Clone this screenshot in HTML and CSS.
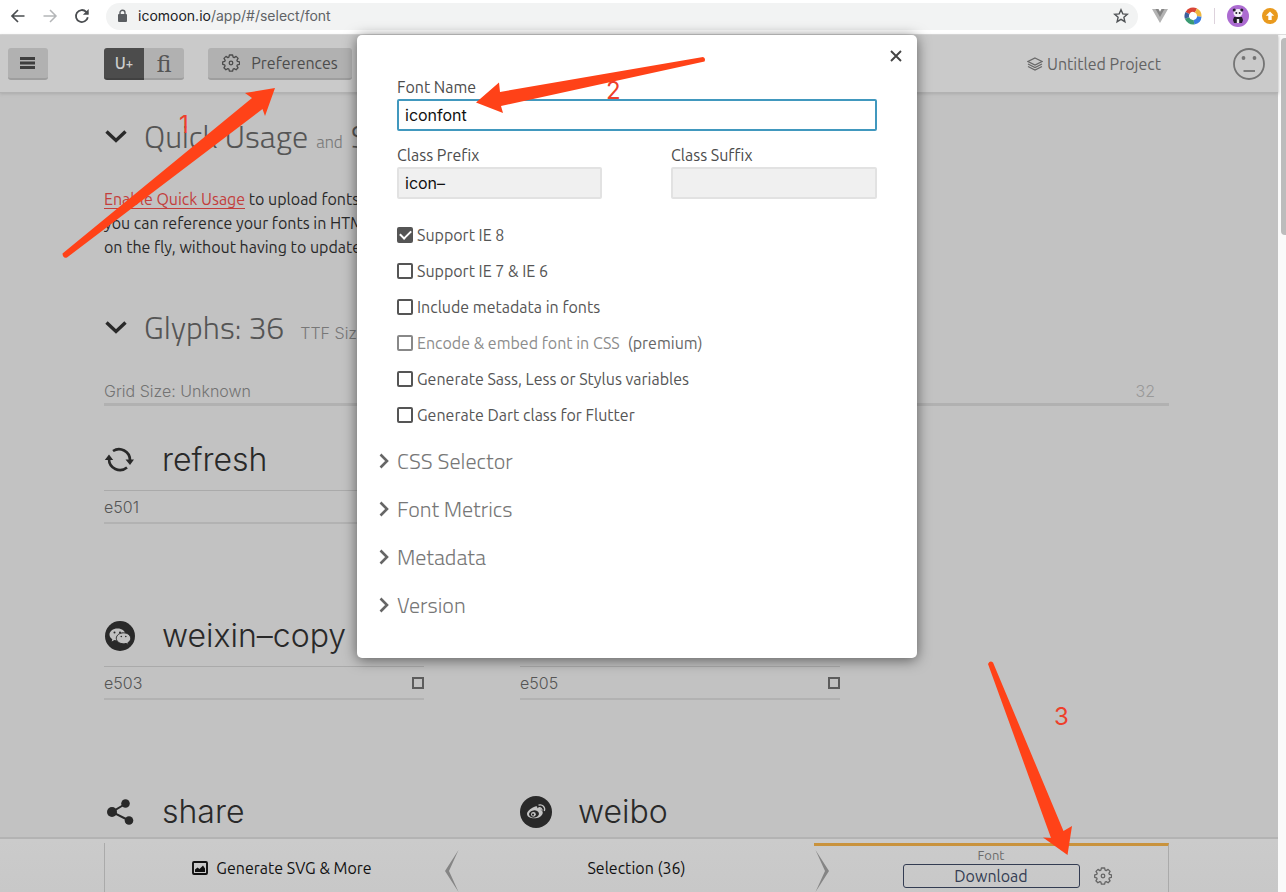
FILE: index.html
```html
<!DOCTYPE html>
<html lang="en">
<head>
<meta charset="utf-8">
<title>IcoMoon App</title>
<link rel="stylesheet" href="styles.css">
</head>
<body>
<svg class="defs" aria-hidden="true">
  <symbol id="gear" viewBox="0 0 18 18">
    <path d="M7.400 1h3.200l.5 2.100 1.100.5 1.900-1.200 2 2-1.200 1.900.5 1.100 2.100.5v2.400l-2.100.5-.5 1.100 1.200 1.900-2 2-1.900-1.200-1.100.5-.5 2.100H7.400l-.5-2.100-1.100-.5-1.900 1.200-2-2 1.200-1.900-.5-1.100L.7 10.300V7.900l2-.5.5-1.100L2 4.400l2-2 1.800 1.200 1.100-.5z" fill="none" stroke="currentColor" stroke-width="1.300" stroke-linejoin="round"/>
    <circle cx="9" cy="9" r="1.800" fill="none" stroke="currentColor" stroke-width="1.300"/>
  </symbol>
  <symbol id="down" viewBox="0 0 22 14"><path d="M1.500 2.500 11 11.500l9.500-9" fill="none" stroke="currentColor" stroke-width="3.400"/></symbol>
  <symbol id="right" viewBox="0 0 10 16"><path d="M1.500 1.500 8 8l-6.500 6.500" fill="none" stroke="currentColor" stroke-width="2.600"/></symbol>
</svg>

<div class="browser">
  <button class="nav" aria-label="Back"><svg width="16" height="16" viewBox="0 0 16 16"><path d="M14.500 8H2.500M8 2 2 8l6 6" fill="none" stroke="#4a4d50" stroke-width="1.700"/></svg></button>
  <button class="nav" aria-label="Forward"><svg width="16" height="16" viewBox="0 0 16 16"><path d="M1.500 8h12M8 2l6 6-6 6" fill="none" stroke="#b4b6b8" stroke-width="1.500"/></svg></button>
  <button class="nav" aria-label="Reload"><svg width="16" height="16" viewBox="0 0 16 16"><path d="M13.800 9.200A6 6 0 1 1 12.200 3.800L14 5.600" fill="none" stroke="#4a4d50" stroke-width="1.800"/><path d="M14.700 1v5.800H8.900z" fill="#4a4d50"/></svg></button>
  <div class="address">
    <svg width="10" height="14" viewBox="0 0 10 14"><rect x="1" y="5" width="9" height="8" rx="1" fill="#5a5d61"/><path d="M3 6V3.800a2.500 2.500 0 0 1 5 0V6" fill="none" stroke="#5a5d61" stroke-width="1.400"/></svg>
    <span class="url"><b>icomoon.io</b>/app/#/select/font</span>
    <svg width="16" height="16" viewBox="0 0 16 16"><path d="m8 1.800 1.800 4.100 4.500.4-3.400 3 1 4.400L8 11.400l-3.900 2.300 1-4.400-3.400-3 4.500-.4z" fill="none" stroke="#505356" stroke-width="1.400"/></svg>
  </div>
  <svg class="ext" width="16" height="16" viewBox="0 0 16 16"><path d="M0 1h5.500L8 5.500 10.500 1H16L8 15z" fill="#b3b3b3"/><path d="M3.500 1h3L8 3.800 9.500 1h3L8 9z" fill="#858585"/></svg>
  <svg class="ext" width="18" height="18" viewBox="0 0 18 18"><g fill="none" stroke-width="4.500"><path d="M3.500 6A6.300 6.300 0 0 1 12 3.500" stroke="#d94436"/><path d="M12 3.500A6.300 6.300 0 0 1 15.300 9.500" stroke="#efb73e"/><path d="M15.300 9.500A6.300 6.300 0 0 1 10 15.200" stroke="#3b7de0"/><path d="M10 15.200A6.300 6.300 0 0 1 3 11" stroke="#3a9a73"/><path d="M3 11a6.300 6.300 0 0 1 .5-5" stroke="#3c5f9c"/></g></svg>
  <span class="divider"></span>
  <svg class="ext" width="22" height="22" viewBox="0 0 22 22"><circle cx="11" cy="11" r="11" fill="#ac6bd1"/><path d="M7 12h8l1 3-1 3H7l-1-3z" fill="#201d28"/><ellipse cx="11" cy="8" rx="4.500" ry="4" fill="#f2eff5"/><circle cx="7.200" cy="5" r="1.500" fill="#272230"/><circle cx="14.800" cy="5" r="1.500" fill="#272230"/><circle cx="9.300" cy="8" r="1" fill="#272230"/><circle cx="12.700" cy="8" r="1" fill="#272230"/><path d="M9.800 14h2.400v4H9.800z" fill="#eee"/></svg>
  <svg class="ext" width="16" height="16" viewBox="0 0 16 16"><circle cx="8" cy="8" r="8" fill="#e99a1e"/><path d="m8 3.500 4.200 4.300H9.700V12H6.300V7.800H3.800z" fill="#fff"/></svg>
</div>

<div class="stage">
  <div class="app">
    <header class="topbar">
      <button class="btn menu" aria-label="Menu"><svg width="16" height="12" viewBox="0 0 16 12"><path d="M0 1.500h15M0 6h15M0 10.500h15" stroke="#3e3e3e" stroke-width="2.800"/></svg></button>
      <div class="toggle">
        <button class="btn on">U<small>+</small></button>
        <button class="btn liga">ﬁ</button>
      </div>
      <button class="btn prefs"><svg width="18" height="18"><use href="#gear"/></svg>Preferences</button>
      <a class="project" href="#"><svg width="16" height="14" viewBox="0 0 16 14"><g fill="none" stroke="#686868" stroke-width="1.200"><path d="M8 1 15 4.500 8 8 1 4.500z"/><path d="M1 7l7 3.500L15 7M1 9.500 8 13l7-3.500"/></g></svg>Untitled Project</a>
      <button class="face" aria-label="Account"><svg width="34" height="34" viewBox="0 0 34 34"><circle cx="17" cy="17" r="15" fill="none" stroke="#747474" stroke-width="1.800"/><circle cx="11.500" cy="11" r="1.900" fill="#747474"/><circle cx="22.500" cy="11" r="1.900" fill="#747474"/><path d="M11.500 24h11.500" stroke="#747474" stroke-width="1.800"/></svg></button>
    </header>

    <main class="content">
      <h2 class="heading"><svg width="22" height="14"><use href="#down"/></svg><span>Quick Usage</span><small>and</small><span class="tail">S</span></h2>
      <p class="intro"><a href="#">Enable Quick Usage</a> to upload fonts<br>you can reference your fonts in HTML<br>on the fly, without having to update</p>
      <h2 class="heading"><svg width="22" height="14"><use href="#down"/></svg><span>Glyphs: 36</span><small class="ttf">TTF Size</small></h2>
      <div class="gridsize"><span>Grid Size: Unknown</span><span>32</span></div>
      <div class="glyphs">
        <article class="glyph">
          <div class="name"><svg width="32" height="32" viewBox="0 0 32 32"><g fill="none" stroke="#292929" stroke-width="2.600"><path d="M9 7a11 11 0 0 1 17 9"/><path d="M23 23.500A11 11 0 0 1 5 15"/></g><path d="M21.500 15.500h8.500L26 21zM.8 16h8.400L5 10.500z" fill="#292929"/></svg>refresh</div>
          <div class="code"><span>e501</span></div>
        </article>
        <article class="glyph"><div class="name"></div><div class="code"></div></article>
        <article class="glyph">
          <div class="name"><svg width="32" height="32" viewBox="0 0 32 32"><circle cx="16" cy="16" r="15" fill="#292929"/><path d="M13.500 8.500c-4.500 0-8 2.700-8 6 0 2 1.100 3.700 2.800 4.800L7.700 21.500l2.700-1.500c1 .3 2 .5 3.100.5 4.500 0 8-2.700 8-6s-3.500-6-8-6z" fill="#c1c1c1"/><path d="M19.500 12.800c-4 0-7.200 2.500-7.200 5.500s3.200 5.500 7.200 5.500c.9 0 1.700-.1 2.500-.4l2.300 1.300-.5-1.900c1.800-1 2.900-2.600 2.900-4.500 0-3-3.200-5.500-7.200-5.500z" fill="#c1c1c1" stroke="#292929" stroke-width="1"/><g fill="#292929"><circle cx="10.500" cy="12.500" r="1"/><circle cx="16" cy="12.500" r="1"/><circle cx="17.300" cy="16.500" r=".8"/><circle cx="21.800" cy="16.500" r=".8"/></g></svg>weixin–copy</div>
          <div class="code"><label for="g503">e503</label><input type="checkbox" id="g503"></div>
        </article>
        <article class="glyph">
          <div class="name"></div>
          <div class="code"><label for="g505">e505</label><input type="checkbox" id="g505"></div>
        </article>
        <article class="glyph">
          <div class="name"><svg width="32" height="32" viewBox="0 0 32 32"><path d="M22 7.500 8 16l17 8.500" fill="none" stroke="#292929" stroke-width="2"/><g fill="#292929"><circle cx="21.500" cy="7.500" r="4.300"/><circle cx="8" cy="16" r="5"/><circle cx="25" cy="24.500" r="4.300"/></g></svg>share</div>
          <div class="code"></div>
        </article>
        <article class="glyph">
          <div class="name"><svg width="32" height="32" viewBox="0 0 32 32"><circle cx="16" cy="16" r="16" fill="#292929"/><path d="M14 11c2-1.200 3.700-.9 3.300 1.200 2.500-.9 4.500-.1 3.500 2 3.500 1.100 2 5.200-1.500 7-4 2.100-12 1.400-12.300-3.200C6.800 15.400 11 12.200 14 11z" fill="#c5c5c5"/><ellipse cx="14" cy="18" rx="5" ry="3.600" fill="#292929" transform="rotate(-10 14 18)"/><circle cx="13.400" cy="18.300" r="2.400" fill="#c5c5c5"/><circle cx="13" cy="18.600" r="1.100" fill="#292929"/><path d="M18.500 9.200c4-1.200 7.200 2 5.800 5.800M18.500 11.800c2.300-.5 4 1 3.300 3" fill="none" stroke="#c5c5c5" stroke-width="1.300"/></svg>weibo</div>
          <div class="code"></div>
        </article>
      </div>
    </main>

    <footer class="bottombar">
      <button class="tab first"><svg width="16" height="14" viewBox="0 0 16 14"><rect x="1" y="1" width="14" height="12" rx="1" fill="none" stroke="#111" stroke-width="1.900"/><path d="M3 11V8.500l2.500-2 2 1.500L11 4.500l2 3V11z" fill="#111"/></svg>Generate SVG &amp; More<svg class="edge" width="14" height="42" viewBox="0 0 14 42"><path d="M13.500 0 0 21l13.500 21L4 21z" fill="#858585"/></svg></button>
      <button class="tab">Selection (36)</button>
      <div class="tab current">
        <svg class="edge" width="14" height="42" viewBox="0 0 14 42"><path d="M.5 0 14 21 .5 42 10 21z" fill="#858585"/></svg>
        <span class="kind">Font</span>
        <div class="actions"><button class="download">Download</button><button class="gearbtn" aria-label="Font settings"><svg width="18" height="18"><use href="#gear"/></svg></button></div>
      </div>
    </footer>
  </div>
  <div class="scroll"><div class="thumb"></div></div>

  <div class="layer">
    <form class="modal">
      <button type="button" class="close" aria-label="Close"><svg width="14" height="14" viewBox="0 0 14 14"><path d="m2 2 10 10M12 2 2 12" stroke="#444" stroke-width="1.900"/></svg></button>
      <div class="field"><label for="fname">Font Name</label><input class="focus" id="fname" type="text" value="iconfont"></div>
      <div class="pair">
        <div class="field"><label for="pre">Class Prefix</label><input id="pre" type="text" value="icon–"></div>
        <div class="field"><label for="suf">Class Suffix</label><input id="suf" type="text"></div>
      </div>
      <div class="checks">
        <label><input type="checkbox" checked>Support IE 8</label>
        <label><input type="checkbox">Support IE 7 &amp; IE 6</label>
        <label><input type="checkbox">Include metadata in fonts</label>
        <label class="off"><input type="checkbox" disabled>Encode &amp; embed font in CSS<span>(premium)</span></label>
        <label><input type="checkbox">Generate Sass, Less or Stylus variables</label>
        <label><input type="checkbox">Generate Dart class for Flutter</label>
      </div>
      <div class="groups">
        <button type="button"><svg width="10" height="16"><use href="#right"/></svg>CSS Selector</button>
        <button type="button"><svg width="10" height="16"><use href="#right"/></svg>Font Metrics</button>
        <button type="button"><svg width="10" height="16"><use href="#right"/></svg>Metadata</button>
        <button type="button"><svg width="10" height="16"><use href="#right"/></svg>Version</button>
      </div>
    </form>
  </div>
</div>

<svg class="marks" width="1286" height="892" viewBox="0 0 1286 892">
  <g fill="#ff4218">
    <path d="M62.500 253.500 252 98l-7-5 30-5-10 28-2.500-7L67 257.500q-4 1.500-4.500-4z"/>
    <path d="M703 57q3 1 1.500 4.500L501 106l2 7-27-10.500 23-20 1 9.500z"/>
    <path d="M988 664q2-4 5-1.500L1063.500 831l8.500-5-4.500 29-24.500-17.500 8 .5z"/>
  </g>
  <g class="digits"><text x="179" y="133">1</text><text x="606" y="99">2</text><text x="1054" y="725">3</text></g>
</svg>
</body>
</html>
```
FILE: styles.css
```css
* { box-sizing: border-box; }
body {
  margin: 0;
  height: 100vh;
  display: flex;
  flex-direction: column;
  overflow: hidden;
  position: relative;
  background: #fff;
  color: #292929;
  font: 16px/24px Ubuntu, "Noto Sans", sans-serif;
}
button { border: 0; padding: 0; background: none; color: inherit; font: inherit; }
svg { flex: none; display: block; }
.defs { position: absolute; width: 0; height: 0; }

/* browser chrome */
.browser {
  flex: none;
  height: 35px;
  display: flex;
  align-items: center;
  padding: 0 8px 2px 10px;
  border-bottom: 1px solid #dcdcdc;
}
.nav { width: 16px; margin-right: 16px; }
.address {
  flex: 1;
  height: 27px;
  margin-right: 14px;
  padding: 0 9px 0 11px;
  border-radius: 14px;
  background: #f2f3f3;
  display: flex;
  align-items: center;
  gap: 11px;
}
.url { flex: 1; font: 14px/24px Inter, Roboto, sans-serif; color: #606366; }
.url b { font-weight: 400; color: #202124; }
.ext { margin-right: 16px; }
.ext:nth-of-type(2) { margin-right: 12px; }
.divider { width: 1px; height: 16px; margin-right: 12px; background: #ddd2dc; }
.ext:nth-of-type(3) { margin-right: 13px; }
.ext:last-child { margin-right: 0; }

/* page area */
.stage { flex: 1; min-height: 0; display: flex; position: relative; }
.app {
  flex: 1;
  min-width: 0;
  display: flex;
  flex-direction: column;
  position: relative;
  background: #c2c2c2;
}
.scroll { width: 8px; padding: 3px 0 0 3px; background: #fafafa; }
.thumb { height: 197px; border-radius: 4px 0 0 4px; background: #bcbcbc; }

.topbar {
  flex: none;
  height: 58px;
  padding: 0 12px 0 8px;
  display: flex;
  align-items: center;
  background: #cacaca;
  border-bottom: 1px solid #b2b2b2;
  box-shadow: 0 1px 3px #aaa;
}
.btn {
  height: 32px;
  display: flex;
  align-items: center;
  justify-content: center;
  background: #b1b1b1;
  border-bottom: 2px solid #9e9e9e;
  border-radius: 3px;
}
.menu { width: 40px; margin-right: 56px; }
.toggle { display: flex; margin-right: 24px; }
.toggle .btn { width: 40px; }
.toggle .on { background: #4c4c4c; border-color: #414141; color: #ccc; font-weight: 500; border-radius: 3px 0 0 3px; }
.toggle small { font-size: 13px; }
.toggle .liga { border-radius: 0 3px 3px 0; color: #555; font: 22px/28px "Noto Serif", "DejaVu Serif", serif; }
.prefs { width: 144px; gap: 11px; color: #4c4c4c; font-size: 16px; }
.project {
  margin-left: auto;
  margin-right: 71px;
  display: flex;
  align-items: center;
  gap: 4px;
  color: #636363;
  font-size: 16px;
  text-decoration: none;
}

.content { flex: 1; min-height: 0; overflow: hidden; padding: 19px 109px 0 104px; white-space: nowrap; }
.heading {
  height: 48px;
  margin: 0;
  display: flex;
  align-items: baseline;
  color: #555;
  font: 300 32px/48px "Titillium Web", Roboto, sans-serif;
}
.heading svg { margin: 0 17px 0 1px; align-self: center; color: #292929; }
.heading small { font-size: 17px; margin: 0 8px; color: #777; }
.heading .ttf { margin-left: 16px; font: 300 16px/24px Inter, sans-serif; }
.intro { margin: 27px 0 44px; line-height: 24px; }
.intro a { color: #c33e3c; text-decoration: none; border-bottom: 1px solid #c33e3c; }
.gridsize {
  margin-top: 28px;
  padding: 0 14px 0 0;
  display: flex;
  justify-content: space-between;
  border-bottom: 3px solid #b1b1b1;
  color: #737373;
  font: 300 16px/24px Inter, sans-serif;
}
.gridsize span:last-child { color: #999; }
.glyphs {
  margin-top: 24px;
  display: grid;
  grid-template-columns: repeat(auto-fill, 320px);
  gap: 82px 96px;
}
.name {
  height: 61px;
  display: flex;
  align-items: center;
  gap: 26px;
  font: 300 32px/48px Inter, sans-serif;
  border-bottom: 1px solid #aaa;
}
.code {
  height: 33px;
  display: flex;
  align-items: center;
  justify-content: space-between;
  border-bottom: 2px solid #b2b2b2;
  color: #555;
  font: 300 16px/24px Inter, sans-serif;
}
.code input { appearance: none; width: 12px; height: 12px; margin: 0; border: 2px solid #5c5c5c; }

.bottombar {
  position: absolute;
  left: 0;
  right: 0;
  bottom: 0;
  height: 55px;
  padding: 4px 109px 0 104px;
  display: grid;
  grid-template-columns: repeat(3, 1fr);
  background: linear-gradient(#cbcbcb, #c8c8c8);
  border-top: 2px solid #b3b3b3;
}
.tab { position: relative; display: flex; align-items: center; justify-content: center; gap: 8px; color: #111; }
.tab.first { border-left: 1px solid #aaa; }
.edge { position: absolute; right: 0; top: 7px; }
.tab.current { flex-direction: column; justify-content: flex-start; gap: 0; border-top: 3px solid #c9933d; border-right: 1px solid #aaa; }
.current .edge { left: 1px; right: auto; top: 4px; }
.kind { font-size: 13px; line-height: 18px; color: #6a6a6a; }
.actions { display: grid; grid-template-columns: 1fr 177px 1fr; align-self: stretch; }
.download { grid-column: 2; height: 24px; border: 1px solid #333c52; border-radius: 3px; color: #333c52; line-height: 22px; }
.gearbtn { display: flex; align-items: center; padding-left: 14px; color: #666; }

/* dialog */
.layer { position: absolute; inset: 0 12px auto 0; display: flex; justify-content: center; }
.modal {
  position: relative;
  width: 560px;
  padding: 40px 40px 29px;
  background: #fff;
  border-radius: 5px;
  box-shadow: 0 2px 14px #0008;
  color: #4c4c4c;
}
.close { position: absolute; top: 14px; right: 14px; }
.field { display: flex; flex-direction: column; }
.field input {
  width: 100%;
  height: 32px;
  padding: 0 6px;
  border: 2px solid #e2e2e2;
  border-radius: 2px;
  outline: 0;
  background: #f0f0f0;
  color: #111;
  font: 16px/24px Inter, sans-serif;
}
.field .focus { background: #fff; border-color: #4198be; }
.pair { display: grid; grid-template-columns: 205px 206px; justify-content: space-between; margin-top: 12px; }
.checks { margin-top: 18px; color: #555; }
.checks label { height: 36px; display: flex; align-items: center; gap: 4px; }
.checks span { margin-left: 4px; color: #666; }
.checks input {
  appearance: none;
  width: 16px;
  height: 16px;
  margin: 0;
  border: 2px solid #555;
  border-radius: 2px;
  display: grid;
  place-items: center;
}
.checks input:checked { background: #555; }
.checks input:checked::before {
  content: "";
  width: 9px;
  height: 5px;
  margin-bottom: 3px;
  border: solid #fff;
  border-width: 0 0 2px 2px;
  transform: rotate(-45deg);
}
.checks .off { color: #8c8c8c; }
.checks .off input { border-color: #888; }
.groups { margin: 4px 0 0 -18px; display: flex; flex-direction: column; }
.groups button {
  height: 48px;
  display: flex;
  align-items: center;
  gap: 8px;
  color: #777;
  font: 300 22px/32px "Titillium Web", Roboto, sans-serif;
}
.groups svg { color: #666; }

/* numbered arrows over everything */
.marks { position: absolute; left: 0; top: 0; pointer-events: none; }
.digits { font: 400 24px Inter, sans-serif; fill: #ee3f2b; }
```
